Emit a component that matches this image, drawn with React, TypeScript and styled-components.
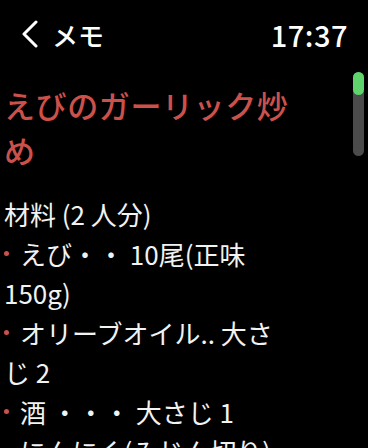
import styled, { createGlobalStyle } from 'styled-components';

const GlobalStyle = createGlobalStyle`
  html, body {
    margin: 0;
    padding: 0;
    background: #000;
  }
  body {
    font-family: "Noto Sans CJK JP", "Noto Sans", sans-serif;
    -webkit-font-smoothing: antialiased;
  }
`;

const Screen = styled.div`
  position: relative;
  width: 368px;
  height: 448px;
  overflow: hidden;
  background: #000;
  color: #fff;
`;

const Header = styled.header`
  display: flex;
  align-items: center;
  justify-content: space-between;
  height: 68px;
  padding: 0 20px 0 21px;
  box-sizing: border-box;
`;

const BackButton = styled.div`
  display: flex;
  align-items: center;
  gap: 14px;
  font-size: 26px;
  font-weight: 500;
`;

const Clock = styled.div`
  font-size: 29px;
  font-weight: 500;
  letter-spacing: 0.5px;
`;

const Content = styled.main`
  width: 290px;
  padding: 14px 0 0 4px;
`;

const Title = styled.h1`
  margin: 0;
  color: #cd514b;
  font-size: 31px;
  font-weight: 500;
  line-height: 45px;
  letter-spacing: 0.6px;
`;

const Body = styled.div`
  margin-top: 22px;
  font-size: 26px;
  line-height: 39.5px;
  color: #f2f2f2;
`;

const Line = styled.p`
  margin: 0;
`;

const Bullet = styled.span`
  display: inline-block;
  width: 16px;
  position: relative;
  height: 1em;
  &::before {
    content: '';
    position: absolute;
    left: 0;
    top: 50%;
    width: 5px;
    height: 5px;
    border-radius: 50%;
    background: #cd514b;
    transform: translateY(-20%);
  }
`;

const ScrollTrack = styled.div`
  position: absolute;
  top: 72px;
  right: 4px;
  width: 11px;
  height: 84px;
  border-radius: 6px;
  background: #4b4b4b;
`;

const ScrollThumb = styled.div`
  width: 100%;
  height: 23px;
  border-radius: 6px;
  background: #5fd46c;
`;

const ingredients = [
  'えび・・ 10尾(正味150g)',
  'オリーブオイル.. 大さじ 2',
  '酒 ・・・ 大さじ 1',
  'にんにく(みじん切り)',
];

export default function App() {
  return (
    <Screen>
      <GlobalStyle />
      <Header>
        <BackButton>
          <svg width="17" height="28" viewBox="0 0 17 28">
            <path d="M15 2 L3 14 L15 26" fill="none" stroke="#fff" strokeWidth="3" strokeLinecap="round" strokeLinejoin="round" />
          </svg>
          <span>メモ</span>
        </BackButton>
        <Clock>17:37</Clock>
      </Header>
      <Content>
        <Title>えびのガーリック炒め</Title>
        <Body>
          <Line>材料 (2 人分)</Line>
          {ingredients.map((item) => (
            <Line key={item}>
              <Bullet />
              {item}
            </Line>
          ))}
        </Body>
      </Content>
      <ScrollTrack>
        <ScrollThumb />
      </ScrollTrack>
    </Screen>
  );
}
